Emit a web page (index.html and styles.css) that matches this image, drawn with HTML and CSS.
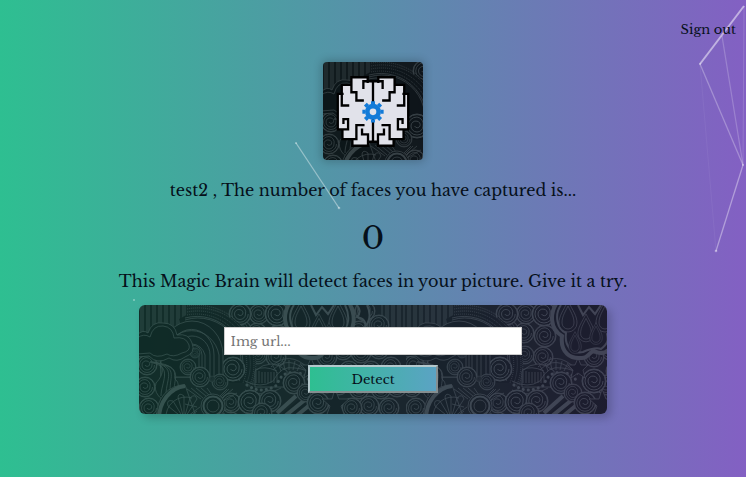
FILE: index.html
```html
<!DOCTYPE html>
<html lang="en">
<head>
<meta charset="utf-8">
<meta name="viewport" content="width=device-width, initial-scale=1">
<title>Magic Brain</title>
<link rel="stylesheet" href="styles.css">
</head>
<body>
<svg class="particles" viewBox="0 0 746 477" preserveAspectRatio="none" aria-hidden="true">
  <g stroke="#fff" fill="none">
    <path d="M296 143L339 208" stroke-width="1.300" stroke-opacity=".4"/>
    <path d="M744 6L700 64" stroke-width="2" stroke-opacity=".5"/>
    <path d="M700 64L743 165" stroke-width="1.300" stroke-opacity=".28"/>
    <path d="M722 36L743 165" stroke-width="1.300" stroke-opacity=".2"/>
    <path d="M744 6L743 165" stroke-opacity=".14"/>
    <path d="M743 165L716 251" stroke-width="1.300" stroke-opacity=".38"/>
    <path d="M700 64L716 251" stroke-opacity=".05"/>
  </g>
  <g fill="#fff" fill-opacity=".4">
    <circle cx="296" cy="143" r="1"/><circle cx="339" cy="208" r="1.300"/>
    <circle cx="700" cy="64" r="1"/><circle cx="743" cy="165" r="1"/>
    <circle cx="716" cy="251" r="1.300"/><circle cx="134" cy="300" r="1"/>
  </g>
</svg>

<svg class="defs" aria-hidden="true">
  <defs>
    <g id="spiral">
      <circle r="10" fill="#000"/>
      <circle r="9.5"/>
      <path d="M7.5 0A7.500 7.500 0 1 1 0 -7.500A6 6 0 0 1 5 0A5 5 0 0 1 -5 0A4 4 0 0 1 0 -4A3 3 0 0 1 2.500 0A2.500 2.500 0 0 1 -2 0"/>
    </g>
    <g id="drop">
      <path d="M0 -19C5 -9 9 -4 9 3A9 9 0 0 1 -9 3C-9 -4 -5 -9 0 -19Z" fill="#000"/>
      <path d="M0 -14C4 -6 6 -3 6 3A6 6 0 0 1 -6 3C-6 -3 -4 -6 0 -14Z"/>
    </g>
    <pattern id="doodle" width="267" height="120" patternUnits="userSpaceOnUse">
      <rect width="267" height="120" fill="#050505"/>
      <g fill="none" stroke="#323434" stroke-width=".8">
        <!-- rain stripes -->
        <path d="M2 0V40M4 0V40M8 0V30M10 0V30M14 0V30M16 0V30M20 0V30M22 0V30M26 0V30M28 0V30M32 0V30M34 0V30M38 0V30M40 0V30M44 0V30M46 0V30M243 0V50M247 0V50M249 0V50M253 0V50M255 0V50M259 0V50M261 0V50M265 0V50"/>
        <!-- filler spirals -->
        <g>
          <use href="#spiral" transform="translate(8 60)"/><use href="#spiral" transform="translate(6 82)"/>
          <use href="#spiral" transform="translate(10 103)"/><use href="#spiral" transform="translate(24 116)"/>
          <use href="#spiral" transform="translate(28 60) scale(.7)"/><use href="#spiral" transform="translate(92 98)"/>
          <use href="#spiral" transform="translate(206 8)"/><use href="#spiral" transform="translate(226 6)"/>
          <use href="#spiral" transform="translate(240 20)"/><use href="#spiral" transform="translate(220 26)"/>
          <use href="#spiral" transform="translate(204 45)"/><use href="#spiral" transform="translate(222 48)"/>
          <use href="#spiral" transform="translate(240 44)"/><use href="#spiral" transform="translate(258 40) scale(.8)"/>
          <use href="#spiral" transform="translate(210 66)"/><use href="#spiral" transform="translate(232 66)"/>
          <use href="#spiral" transform="translate(252 62)"/><use href="#spiral" transform="translate(200 80)"/>
          <use href="#spiral" transform="translate(220 84)"/><use href="#spiral" transform="translate(242 84)"/>
          <use href="#spiral" transform="translate(258 82)"/><use href="#spiral" transform="translate(230 101)"/>
          <use href="#spiral" transform="translate(213 103)"/><use href="#spiral" transform="translate(250 103)"/>
          <use href="#spiral" transform="translate(137 52)"/><use href="#spiral" transform="translate(119 50) scale(.9)"/>
          <use href="#spiral" transform="translate(139 31) scale(1.100)"/><use href="#spiral" transform="translate(118 28)"/>
          <use href="#spiral" transform="translate(104 24) scale(.8)"/><use href="#spiral" transform="translate(120 9)"/>
          <use href="#spiral" transform="translate(101 9) scale(1.100)"/><use href="#spiral" transform="translate(138 9) scale(1.200)"/>
          <use href="#spiral" transform="translate(188 52)"/>
        </g>
        <!-- dotted halo -->
        <path d="M40 14A50 50 0 0 1 112 78H60Z" fill="#000" stroke="none"/>
        <g stroke-dasharray="1 1">
          <path d="M48 4A56 56 0 0 1 110 82M48 7A53 53 0 0 1 107 80M48 10A50 50 0 0 1 104 78M48 1A59 59 0 0 1 113 80"/>
        </g>
        <path d="M46 13A46 46 0 0 1 100 76M46 15A43 43 0 0 1 97 76"/>
        <use href="#spiral" transform="translate(94 64) scale(1.200)"/>
        <!-- rainbow -->
        <path d="M22 50A31 34 0 0 1 84 50V72H22Z" fill="#000"/>
        <path d="M25 50A28 30 0 0 1 80 50V72M30 50A22 25 0 0 1 75 50V72M35 50A18 19 0 0 1 71 50V72M39 50A14 15 0 0 1 66 50V72M43 50A10 10 0 0 1 63 50V72"/>
        <path d="M22 54Q56 36 60 50V72H22Z" fill="#000"/>
        <use href="#spiral" transform="translate(49 62) scale(.8)"/><use href="#spiral" transform="translate(56 48) scale(.5)"/>
        <!-- cloud -->
        <path d="M-2 30Q4 24 9 28Q13 16 24 18Q36 18 38 30Q50 28 53 38Q57 48 46 52Q38 58 30 53Q18 60 10 51L-2 52Z" fill="#000"/>
        <path d="M-2 33Q5 28 11 32Q14 20 24 21Q34 22 35 33Q47 31 50 40Q52 46 43 48Q34 53 28 49Q17 54 11 48L-2 49Z"/>
        <!-- leaf -->
        <path d="M11 57C28 56 25 70 17 78C14 88 22 94 26 96C36 92 42 84 38 76C31 72 46 60 11 57Z" fill="#000"/>
        <path d="M14 58C34 62 22 78 22 91M18 58C38 64 26 76 27 92M22 59C40 65 28 76 32 90M26 60C44 66 33 76 36 86"/>
        <use href="#spiral" transform="translate(61 72)"/><use href="#spiral" transform="translate(81 77) scale(.8)"/>
        <use href="#spiral" transform="translate(73 74) scale(.3)"/>
        <!-- fan and wheel -->
        <path d="M18 112A27 29 0 0 1 46 80L60 120H18Z" fill="#000"/>
        <path d="M20 114A29 33 0 0 1 46 81" stroke-width="4"/>
        <path d="M27 114A20 20 0 0 1 53 93M45 114L29 101Q27 94 34 96L45 114L39 92Q40 87 45 91L45 114L51 93Q56 88 58 94L45 114L61 102"/>
        <path d="M48 84L62 94M52 83L64 93M57 83L67 91M62 83L70 90M68 83L73 90M88 84L80 92M94 84L82 94M98 88L84 96M58 102L46 99M58 106L50 112M86 104L100 110M84 108L94 114M90 84L81 93"/>
        <circle cx="74" cy="101" r="12" fill="#000"/><circle cx="74" cy="101" r="9.500" stroke-width="2"/><circle cx="74" cy="101" r="6"/>
        <!-- hatched arches -->
        <path d="M116 82V66Q132 52 148 66V82Z" fill="#000"/>
        <path d="M117 78V66M120 78V66M123 78V67M126 78V67M129 78V67M132 78V67M135 78V67M138 78V67M116 65Q125 60 138 66M132 62Q150 44 170 64M134 65Q150 49 168 67M138 68L134 61M142 66L139 58M146 65L144 56M150 65V55M154 65L156 56M158 66L162 58"/>
        <!-- beads -->
        <g stroke-width="3" stroke-linecap="round" stroke-dasharray=".1 5"><path d="M108 80Q122 90 138 80Q142 66 156 68Q168 68 170 76"/></g>
        <path d="M106 85Q124 94 142 83M106 76Q122 84 134 76Q142 60 156 63Q168 64 172 70"/>
        <use href="#spiral" transform="translate(155 78) scale(1.100)"/>
        <use href="#spiral" transform="translate(111 97) scale(1.200)"/><use href="#spiral" transform="translate(131 96) scale(1.100)"/>
        <use href="#spiral" transform="translate(123 108)"/>
        <!-- diagonal bars -->
        <path d="M140 111L170 86L190 111Z" fill="#000" stroke="none"/>
        <path d="M138 108L157 91M146 111L167 94M156 112L172 99" stroke-width="4"/>
        <use href="#spiral" transform="translate(167 88) scale(.9)"/><use href="#spiral" transform="translate(188 76) scale(1.200)"/>
        <use href="#spiral" transform="translate(179 98) scale(1.100)"/>
        <path d="M172 53L175 60L182 60L177 65L179 73L172 68L165 73L167 65L162 60L169 60Z" fill="#000"/>
        <path d="M196 84L200 94L210 94L202 101L206 112H187L191 101L183 94L193 94Z" fill="#000"/>
        <!-- raindrops -->
        <path d="M152 -4C143 8 144 24 156 31C154 48 165 54 175 53C182 54 184 46 188 46C200 52 208 42 205 33C216 27 218 10 209 -4Z" fill="#000" stroke-width="4"/>
        <path d="M155 0C148 10 151 24 160 28C158 42 167 49 177 47C184 44 190 42 195 44C203 38 202 34 201 29C211 22 211 10 206 0M172 0L177 10L183 2L189 9L195 0" stroke-width="2"/>
        <use href="#drop" transform="translate(162 15)"/><use href="#drop" transform="translate(199 15)"/>
        <use href="#drop" transform="translate(180 26) scale(.9)"/><use href="#drop" transform="translate(190 31) scale(.7)"/>
        <use href="#drop" transform="translate(169 40) scale(.7)"/>
        <path d="M216 -2Q224 6 218 12Q228 14 226 22Q234 12 228 0" fill="#000" stroke-width="2"/>
      </g>
    </pattern>
  </defs>
</svg>

<nav class="nav"><a class="signout" href="#">Sign out</a></nav>

<main class="page">
  <div class="logo">
    <svg class="texture logo-texture" aria-hidden="true"><rect width="100%" height="100%" fill="url(#doodle)"/></svg>
    <svg class="brain" viewBox="30 28 300 295" role="img" aria-label="Brain">
      <defs>
        <g id="half">
          <path d="M181 86H164V74H115V97H86V124H74V231H88V260H118V280H165V268H181Z" fill="#e1e2ea" stroke="none"/>
          <path d="M180 86H151V106M164 88V74H115V119H130V144H149M115 97H86V159H105M88 124H74V231H105V200H91V211M88 231V260H130V218H151M118 260V280H165V246H147V232M165 268H180"/>
        </g>
      </defs>
      <g fill="none" stroke="#000" stroke-width="7" stroke-linecap="square">
        <use href="#half"/>
        <use href="#half" transform="translate(360 0) scale(-1 1)"/>
        <path d="M180 86V268"/>
      </g>
      <circle cx="180" cy="178" r="17" fill="#e1e2ea" stroke="#137bd8" stroke-width="14"/>
      <path d="M180 155V146M180 201V210M157 178H148M203 178H212M164 162L157 155M196 162L203 155M164 194L157 201M196 194L203 201" stroke="#137bd8" stroke-width="12" fill="none"/>
    </svg>
  </div>

  <p class="line">test2 , The number of faces you have captured is...</p>
  <p class="count">0</p>
  <p class="line intro">This Magic Brain will detect faces in your picture. Give it a try.</p>

  <form class="panel">
    <svg class="texture" aria-hidden="true"><rect width="100%" height="100%" fill="url(#doodle)"/></svg>
    <input class="url" type="text" placeholder="Img url..." aria-label="Image url">
    <button class="detect" type="button">Detect</button>
  </form>
</main>
</body>
</html>
```
FILE: styles.css
```css
* { box-sizing: border-box; }

html { min-height: 100%; background: linear-gradient(to right, #2ebf91, #8360c3); }

body {
  margin: 0;
  color: #06101a;
  font-family: "Libre Baskerville", "Liberation Serif", serif;
}

.particles {
  position: absolute;
  inset: 0;
  width: 100%;
  height: 100%;
  z-index: -1;
}

.defs { position: absolute; width: 0; height: 0; }

.nav {
  display: flex;
  justify-content: flex-end;
  padding: 20px 10px;
}

.signout {
  color: inherit;
  font-size: 13px;
  line-height: 20px;
  text-decoration: none;
}

.page {
  display: flex;
  flex-direction: column;
  align-items: center;
  padding: 2px 16px 32px;
}

.logo {
  position: relative;
  width: 100px;
  height: 98px;
  border-radius: 4px;
  overflow: hidden;
  box-shadow: 0 0 8px 2px rgba(0, 0, 0, .2);
}

.texture {
  position: absolute;
  inset: 0;
  width: 100%;
  height: 100%;
  opacity: .75;
}

.logo-texture { opacity: .85; }

.brain {
  position: relative;
  display: block;
  width: 100%;
  height: 100%;
}

.line {
  margin: 18px 0 0;
  font-size: 16px;
  line-height: 24px;
  text-align: center;
}

.count {
  margin: 12px 0 0;
  font-size: 32px;
  line-height: 48px;
}

.intro { margin: 7px 0 12px; }

.panel {
  position: relative;
  display: flex;
  flex-direction: column;
  align-items: center;
  gap: 10px;
  width: 90%;
  max-width: 468px;
  padding: 22px 32px 21px;
  border-radius: 6px;
  overflow: hidden;
  box-shadow: 4px 4px 8px 0 rgba(0, 0, 0, .2);
}

.url,
.detect {
  position: relative;
  height: 28px;
  margin: 0;
  font-family: inherit;
  font-size: 13px;
}

.url {
  width: 74%;
  padding: 0 6px;
  border: 1px solid #ccc;
  background: #fff;
}

.url::placeholder { color: #757575; }

.detect {
  width: 32%;
  padding: 0;
  border: 2px solid;
  border-color: #b4c8cc #858e90 #858e90 #b4c8cc;
  color: #06101a;
  background: linear-gradient(to right, #2ebf91, #5ba3c4);
}
```
